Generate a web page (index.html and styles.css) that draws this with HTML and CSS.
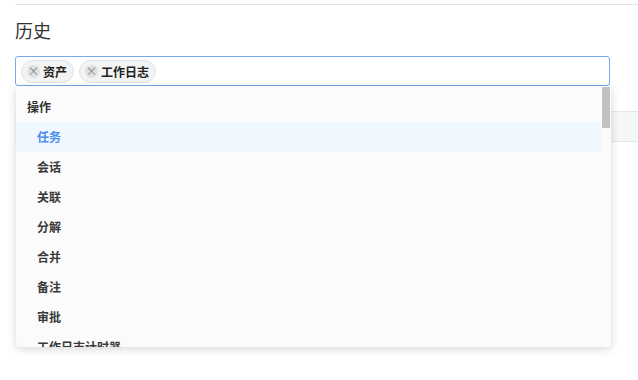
FILE: index.html
```html
<!DOCTYPE html>
<html lang="zh-CN">
<head>
  <meta charset="UTF-8">
  <title>历史</title>
  <link rel="stylesheet" href="styles.css">
</head>
<body>
  <div class="page">
    <h2 class="title">历史</h2>

    <div class="select">
      <div class="select-box">
        <span class="tag"><span class="tag-close">×</span>资产</span>
        <span class="tag"><span class="tag-close">×</span>工作日志</span>
      </div>

      <div class="dropdown">
        <ul class="options">
          <li class="group">操作</li>
          <li class="option active">任务</li>
          <li class="option">会话</li>
          <li class="option">关联</li>
          <li class="option">分解</li>
          <li class="option">合并</li>
          <li class="option">备注</li>
          <li class="option">审批</li>
          <li class="option">工作日志计时器</li>
          <li class="option">附件</li>
          <li class="option">评论</li>
          <li class="option">通知</li>
          <li class="option">状态变更</li>
          <li class="option">优先级变更</li>
          <li class="option">指派</li>
          <li class="option">转交</li>
          <li class="option">关闭</li>
          <li class="option">重新打开</li>
          <li class="group">对象</li>
          <li class="option">资产</li>
          <li class="option">工作日志</li>
          <li class="option">事件</li>
          <li class="option">问题</li>
          <li class="option">变更</li>
          <li class="option">发布</li>
          <li class="option">项目</li>
          <li class="option">里程碑</li>
          <li class="option">知识库</li>
          <li class="option">解决方案</li>
          <li class="option">服务目录</li>
          <li class="option">合同</li>
          <li class="option">供应商</li>
          <li class="option">采购单</li>
        </ul>
        <div class="scroll-thumb"></div>
      </div>
    </div>

    <div class="table-head"></div>
  </div>
</body>
</html>
```

FILE: styles.css
```css
html, body { height: 100%; }
body { margin: 0; font-family: "Noto Sans CJK SC", "Noto Sans", sans-serif; color: #333; background: #fff; }
.page { min-height: 376px; margin: 4px 0 0 15px; padding-right: 2px; border-top: 1px solid #e4e4e4; }

.title { margin: 0; padding-top: 13px; font-size: 18px; line-height: 24px; font-weight: normal; color: #333; }

.select { position: relative; margin-top: 14px; width: 595px; }
.select-box { height: 28px; border: 1px solid #7ba7ee; border-radius: 3px; display: flex; align-items: center; gap: 5px; padding: 0 5px; background: #fff; }

.tag { display: inline-flex; align-items: center; height: 21px; padding: 0 6px 0 5px; border: 1px solid #e2e2e2; border-radius: 12px; background: #f3f3f3; font-size: 12px; font-weight: bold; color: #222; }
.tag-close { display: inline-flex; align-items: center; justify-content: center; width: 13px; height: 13px; margin-right: 3px; border-radius: 50%; background: #e0e0e0; color: #8a8a8a; font-size: 12px; font-weight: normal; line-height: 1; }

.dropdown { position: absolute; top: 30px; left: 1px; right: -1px; height: 261px; background: #fbfbfb; border-radius: 0 0 4px 4px; box-shadow: 0 2px 8px rgba(0, 0, 0, 0.16); z-index: 10; overflow: hidden; }
.options { list-style: none; margin: 0; padding: 6px 10px 6px 0; height: 100%; box-sizing: border-box; overflow: hidden; }
.scroll-thumb { position: absolute; top: 1px; right: 1px; width: 8px; height: 41px; background: #c1c1c1; }

.group { height: 30px; line-height: 30px; padding-left: 11px; font-size: 12px; font-weight: bold; color: #333; }
.option { height: 30px; line-height: 30px; padding-left: 21px; font-size: 12px; font-weight: bold; color: #3a3a3a; }
.option.active { background: #eff8ff; color: #4a8af4; }

.table-head { margin-top: 25px; height: 29px; margin-right: -2px; background: #f5f6f8; border-top: 1px solid #e3e6ec; border-bottom: 1px solid #e3e6ec; }
```
